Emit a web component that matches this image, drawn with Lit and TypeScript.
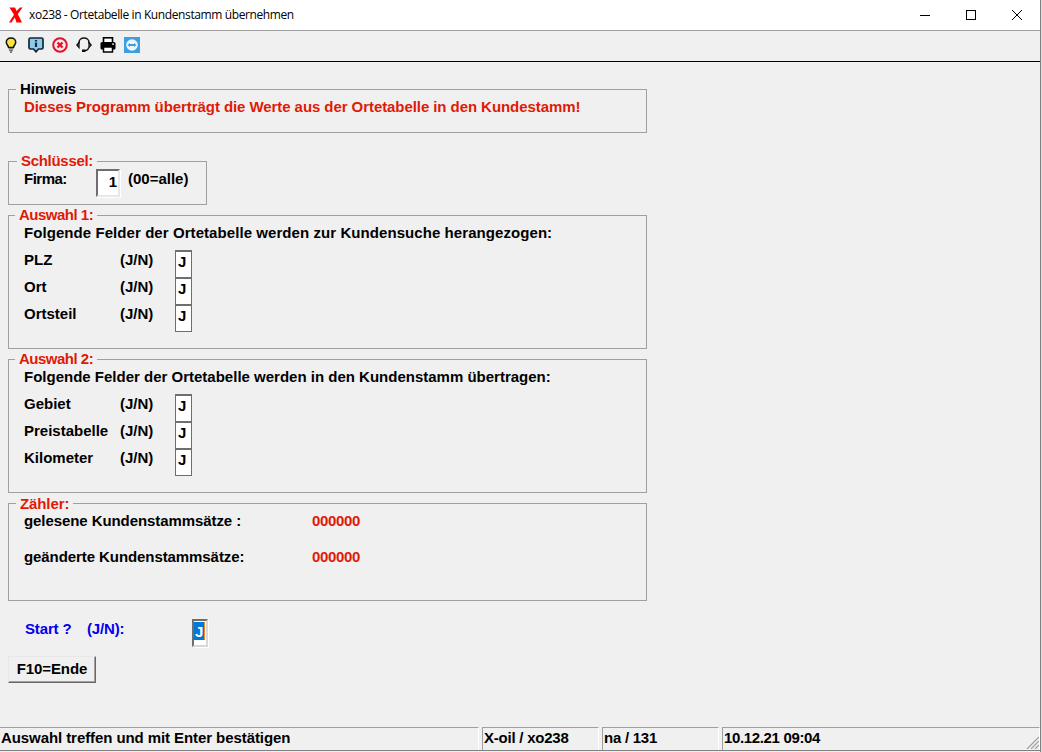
import { LitElement, html, css, svg } from "lit";
import { customElement } from "lit/decorators.js";

const bulb = svg`<svg width="12" height="16" viewBox="0 0 12 16"><path d="M6 1C3 1 1.300 3 1.300 5.200C1.300 7.400 3.200 8.200 3.600 10.500H8.400C8.800 8.200 10.700 7.400 10.700 5.200C10.700 3 9 1 6 1Z" fill="#f8e43c" stroke="#111" stroke-width="1.500"/><path d="M3.800 12H8.200M4.200 13.700H7.800M5 15.300H7" stroke="#444" stroke-width="1.100"/></svg>`;
const info = svg`<svg width="16" height="16" viewBox="0 0 16 16"><path d="M2.500 1H13.500Q15 1 15 2.500V10.500Q15 12 13.500 12H10.500L8 14.800L5.500 12H2.500Q1 12 1 10.500V2.500Q1 1 2.500 1Z" fill="#8ecbe8" stroke="#10263c" stroke-width="1.700"/><path d="M8 3V4.500M8 5.500V10" stroke="#0d2a4a" stroke-width="2.200"/></svg>`;
const stop = svg`<svg width="16" height="16" viewBox="0 0 16 16"><circle cx="8" cy="8" r="6.800" fill="#f8e8ea" stroke="#e0132f" stroke-width="2"/><path d="M5.500 5.500L10.500 10.500M10.500 5.500L5.500 10.500" stroke="#e0132f" stroke-width="2.400"/></svg>`;
const headset = svg`<svg width="16" height="16" viewBox="0 0 16 16"><path d="M3 6.500V5.500C3 2.800 5.200 1 8 1C10.800 1 13 2.800 13 5.500V6.500" fill="none" stroke="#111" stroke-width="1.500"/><path d="M3 5.500L0.800 8L3 10.500ZM13 5.500L15.200 8L13 10.500Z" fill="#fff" stroke="#111" stroke-width="1.300"/><path d="M12.500 10.500C12.500 12.500 11 13.500 8.500 13.500" fill="none" stroke="#111" stroke-width="1.300"/><rect x="6" y="12.500" width="3.500" height="2.500" fill="#111"/></svg>`;
const printer = svg`<svg width="16" height="16" viewBox="0 0 16 16"><rect x="3.500" y="0.800" width="9" height="5" fill="#fff" stroke="#000" stroke-width="1.600"/><rect x="0.500" y="5" width="15" height="7.500" rx="1.500" fill="#000"/><rect x="3.500" y="10" width="9" height="5" fill="#fff" stroke="#000" stroke-width="1.500"/><rect x="12" y="6.500" width="2" height="1.200" fill="#fff"/></svg>`;
const tv = svg`<svg width="16" height="16" viewBox="0 0 16 16"><rect width="16" height="16" fill="#3c9fe0"/><circle cx="8" cy="8" r="5.800" fill="#eef6fc"/><path d="M3.500 8L6 6V7.100H10V6L12.500 8L10 10V8.900H6V10Z" fill="#3c9fe0"/></svg>`;
const logo = svg`<svg width="14" height="16" viewBox="0 0 14 16"><path d="M0.500 0.500H6L7.600 4L11 0.500H13.500L8.800 7L13 15.500H7.500L5.800 10.500L2.500 15.500H0L5 7.800Z" fill="#f00"/></svg>`;

@customElement("app-root")
export class AppRoot extends LitElement {
  static styles = css`
    :host { display: block; width: 1042px; height: 752px; overflow: hidden; background: #dcdcdc; }
    * { box-sizing: border-box; }
    .win {
      width: 1041px; height: 752px; display: flex; flex-direction: column;
      background: #f0f0f0; border-right: 1px solid #808080; position: relative;
      font: bold 15px/16px "Liberation Sans", Arial, sans-serif; color: #000;
    }
    .title {
      height: 31px; flex: none; background: #fff; border-bottom: 1px solid #a0a0a0;
      display: flex; align-items: center; padding-left: 9px;
    }
    .title .name { margin-left: 6px; font: 400 12px/16px "Open Sans", "Noto Sans", sans-serif; letter-spacing: -0.39px; }
    .title svg { display: block; }
    .wc { margin-left: auto; display: flex; }
    .wc span { width: 46px; height: 30px; display: flex; align-items: center; justify-content: center; }
    .tools {
      height: 31px; flex: none; border-bottom: 1px solid #000; background: #f0f0f0;
      display: flex; align-items: center; padding: 0 0 2px 3px;
    }
    .tools span { width: 24px; display: flex; justify-content: center; }
    .tools span:first-child { width: 16px; margin-right: 5px; }
    main { flex: 1; display: flex; flex-direction: column; align-items: flex-start; padding: 27px 0 0 8px; }
    .group { position: relative; border: 1px solid #a0a0a0; width: 639px; }
    .legend { position: absolute; top: -9px; background: #f0f0f0; padding: 0 4px; white-space: nowrap; line-height: 16px; letter-spacing: -0.1px; }
    .red { color: #e01a06; }
    .hinweis { height: 44px; margin-bottom: 28px; padding: 9px 0 0 15px; }
    .hinweis .legend { left: 7px; }
    .hinweis .red { letter-spacing: -0.07px; }
    .key { width: 199px; height: 44px; margin-bottom: 10px; padding: 7px 0 0 15px; display: flex; }
    .key .legend { left: 8px; letter-spacing: -0.3px; }
    .key .l { width: 72px; padding-top: 2px; letter-spacing: -0.5px; }
    .key .u { margin-left: 8px; padding-top: 2px; }
    .input { background: #fff; border: 2px solid #6e6e6e; border-right-color: #e8e8e8; border-bottom-color: #e8e8e8; box-shadow: 1px 1px 0 #fff; }
    .firma { width: 24px; height: 28px; text-align: right; padding-right: 1px; line-height: 21px; font-size: 15px; }
    .a { padding: 9px 0 0 15px; margin-bottom: 10px; height: 134px; }
    .a .legend { left: 6px; letter-spacing: -0.5px; }
    .head { height: 18px; margin-bottom: 7px; white-space: nowrap; }
    .h1 { letter-spacing: 0.07px; }
    .h2 { letter-spacing: 0; }
    .row { display: grid; grid-template-columns: 96px 55px 16px; height: 27px; }
    .row span { padding-top: 2px; }
    .cell { width: 17px; height: 28px; padding-left: 2px; line-height: 20px; font-size: 15px; border-width: 1px; border-top-width: 2px; border-color: #6e6e6e; box-shadow: none; }
    .z { height: 98px; padding: 9px 0 0 15px; margin-bottom: 18px; }
    .z .legend { left: 7px; top: -8px; }
    .zr { display: grid; grid-template-columns: 288px auto; height: 36px; letter-spacing: -0.08px; }
    .num { letter-spacing: -0.33px; }
    .start { display: flex; width: 639px; height: 28px; color: #0000f0; margin-bottom: 9px; padding: 2px 0 0 17px; position: relative; }
    .start .s1 { width: 62px; letter-spacing: -0.15px; }
    .start .s2 { width: 105px; letter-spacing: -0.15px; }
    .startcell { width: 16px; height: 28px; margin-top: -2px; color: #fff; padding: 1px 0 0 0; border-width: 2px; box-shadow: 1px 1px 0 #fff; border-color: #6e6e6e #d8d8d8 #d8d8d8 #6e6e6e; }
    .sel { display: block; width: 11px; height: 18px; line-height: 19px; background: #0078d7; border-right: 1px solid #e8872e; padding-left: 1px; }
    button {
      width: 88px; height: 27px; font: inherit; color: #000; background: #f0f0f0; padding: 0 0 2px; letter-spacing: -0.1px;
      border: 1px solid; border-color: #e8e8e8 #696969 #696969 #e8e8e8; box-shadow: inset -1px -1px 0 #a0a0a0;
    }
    .status { position: absolute; left: 0; right: 0; top: 727px; height: 24px; display: flex; border-bottom: 1px solid #808080; }
    .status div { height: 23px; border-top: 1px solid #a0a0a0; border-left: 1px solid #a0a0a0; border-right: 1px solid #fff; line-height: 20px; padding-left: 1px; white-space: nowrap; }
    .s-a { width: 479px; border-left: none !important; letter-spacing: -0.08px; }
    .s-b { width: 117px; margin-left: 3px; letter-spacing: -0.23px; }
    .s-c { width: 117px; margin-left: 3px; letter-spacing: -0.25px; }
    .s-d { flex: 1; margin-left: 3px; letter-spacing: -0.35px; }
    .grip { position: absolute; right: 1px; bottom: 1px; display: block; }
  `;

  private row(label: string) {
    return html`<div class="row"><span>${label}</span><span>(J/N)</span><div class="input cell">J</div></div>`;
  }

  render() {
    return html`<div class="win">
      <header class="title">
        ${logo}<span class="name">xo238 - Ortetabelle in Kundenstamm übernehmen</span>
        <div class="wc">
          <span><svg width="10" height="10" viewBox="0 0 10 10"><path d="M0 5.500H10" stroke="#000"/></svg></span>
          <span><svg width="10" height="10" viewBox="0 0 10 10"><rect x="0.500" y="0.500" width="9" height="9" fill="none" stroke="#000"/></svg></span>
          <span><svg width="10" height="10" viewBox="0 0 10 10"><path d="M0 0L10 10M10 0L0 10" stroke="#000"/></svg></span>
        </div>
      </header>
      <nav class="tools">
        <span>${bulb}</span><span>${info}</span><span>${stop}</span><span>${headset}</span><span>${printer}</span><span>${tv}</span>
      </nav>
      <main>
        <section class="group hinweis">
          <div class="legend">Hinweis</div>
          <div class="red">Dieses Programm überträgt die Werte aus der Ortetabelle in den Kundestamm!</div>
        </section>
        <section class="group key">
          <div class="legend red">Schlüssel:</div>
          <span class="l">Firma:</span>
          <div class="input firma">1</div>
          <span class="u">(00=alle)</span>
        </section>
        <section class="group a">
          <div class="legend red">Auswahl 1:</div>
          <div class="head h1">Folgende Felder der Ortetabelle werden zur Kundensuche herangezogen:</div>
          ${this.row("PLZ")}${this.row("Ort")}${this.row("Ortsteil")}
        </section>
        <section class="group a">
          <div class="legend red">Auswahl 2:</div>
          <div class="head h2">Folgende Felder der Ortetabelle werden in den Kundenstamm übertragen:</div>
          ${this.row("Gebiet")}${this.row("Preistabelle")}${this.row("Kilometer")}
        </section>
        <section class="group z">
          <div class="legend red">Zähler:</div>
          <div class="zr"><span>gelesene Kundenstammsätze :</span><span class="red num">000000</span></div>
          <div class="zr"><span>geänderte Kundenstammsätze:</span><span class="red num">000000</span></div>
        </section>
        <div class="start">
          <span class="s1">Start ?</span><span class="s2">(J/N):</span>
          <div class="input startcell"><span class="sel">J</span></div>
        </div>
        <button>F10=Ende</button>
      </main>
      <footer class="status">
        <div class="s-a">Auswahl treffen und mit Enter bestätigen</div>
        <div class="s-b">X-oil / xo238</div>
        <div class="s-c">na / 131</div>
        <div class="s-d">10.12.21 09:04</div>
        <svg class="grip" width="13" height="13" viewBox="0 0 13 13"><path d="M13 1L1 13M13 5L5 13M13 9L9 13" stroke="#a0a0a0" stroke-width="1.200"/></svg>
      </footer>
    </div>`;
  }
}
